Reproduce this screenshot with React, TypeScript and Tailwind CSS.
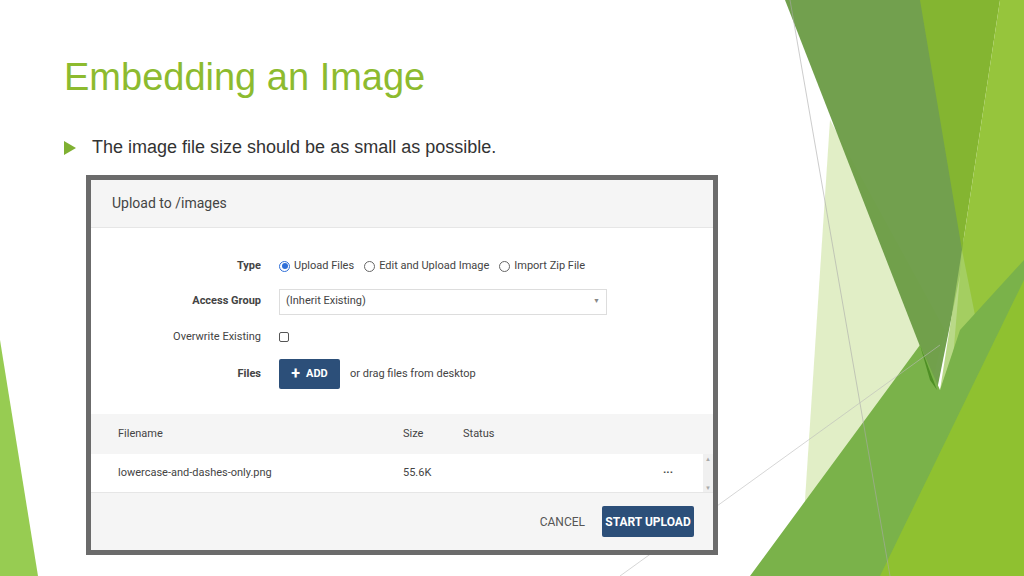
export default function App() {
  const font = { fontFamily: '"Liberation Sans", Arial, sans-serif' };
  const ui = { fontFamily: 'Roboto, "Liberation Sans", sans-serif' };
  return (
    <div className="relative w-[1024px] h-[576px] bg-white overflow-hidden" style={font}>
      <svg className="absolute inset-0" width="1024" height="576" viewBox="0 0 1024 576">
        <polygon points="0,340 0,576 38,576" fill="#8cc63f" opacity="0.9" />
        <polygon points="830,120 945,330 885,576 800,576" fill="#d9eab8" opacity="0.8" />
        <polygon points="785,0 925,0 965,250 937,390" fill="#6a9b45" opacity="0.95" />
        <polygon points="920,0 1000,0 962,250" fill="#84b531" />
        <polygon points="1000,0 1024,0 1024,576 935,576 962,250" fill="#96c53c" />
        <polygon points="962,250 980,340 940,390" fill="#a7d06a" opacity="0.8" />
        <polygon points="750,576 920,345 940,390 960,330 1024,260 1024,576" fill="#7ab24a" />
        <polygon points="920,345 937,390 930,380" fill="#4e8f25" />
        <polygon points="880,576 1024,280 1024,576" fill="#8fc130" />
        <line x1="790" y1="0" x2="890" y2="576" stroke="#aaa" strokeWidth="0.6" />
        <line x1="620" y1="576" x2="940" y2="345" stroke="#bbb" strokeWidth="0.6" />
      </svg>

      <div className="relative pl-[64px] pt-[58px]">
        <h1 className="text-[38px] text-[#8dbb2f] leading-none">Embedding an Image</h1>
        <div className="flex items-center mt-[38px] gap-[16px]">
          <svg width="12" height="14" viewBox="0 0 12 14"><polygon points="0,0 12,7 0,14" fill="#7fb032" /></svg>
          <span className="text-[18px] text-[#333]">The image file size should be as small as possible.</span>
        </div>
      </div>

      <div className="absolute left-[86px] top-[175px] w-[632px] h-[380px] bg-[#6b6b6b] p-[5px]" style={ui}>
        <div className="bg-white w-full h-full flex flex-col">
          <div className="h-[48px] bg-[#f5f5f5] border-b border-[#e6e6e6] flex items-center px-[21px] text-[14px] text-[#444]">Upload to /images</div>
          <div className="flex flex-col gap-[14px] pt-[30px] text-[11px] text-[#444]">
            <div className="flex items-center">
              <div className="w-[170px] text-right font-bold">Type</div>
              <div className="flex items-center gap-[10px] ml-[18px]">
                <label className="flex items-center gap-[4px]"><span className="w-[11px] h-[11px] rounded-full border border-[#2f6fd8] flex items-center justify-center"><span className="w-[6px] h-[6px] rounded-full bg-[#2f6fd8]" /></span>Upload Files</label>
                <label className="flex items-center gap-[4px]"><span className="w-[11px] h-[11px] rounded-full border border-[#666]" />Edit and Upload Image</label>
                <label className="flex items-center gap-[4px]"><span className="w-[11px] h-[11px] rounded-full border border-[#666]" />Import Zip File</label>
              </div>
            </div>
            <div className="flex items-center">
              <div className="w-[170px] text-right font-bold">Access Group</div>
              <div className="ml-[18px] w-[328px] h-[26px] border border-[#ddd] flex items-center justify-between px-[6px]">
                <span>(Inherit Existing)</span><span className="text-[7px] text-[#888]">▼</span>
              </div>
            </div>
            <div className="flex items-center">
              <div className="w-[170px] text-right">Overwrite Existing</div>
              <span className="ml-[18px] w-[10px] h-[10px] border border-[#555] rounded-[2px]" />
            </div>
            <div className="flex items-center">
              <div className="w-[170px] text-right font-bold">Files</div>
              <div className="ml-[18px] w-[61px] h-[30px] bg-[#2c4f79] text-white flex items-center justify-center gap-[6px] rounded-[2px] font-bold"><span className="text-[16px] leading-none">+</span>ADD</div>
              <span className="ml-[10px]">or drag files from desktop</span>
            </div>
          </div>
          <div className="mt-[25px] bg-[#f5f5f5] flex-1 flex flex-col text-[11px] text-[#444]">
            <div className="flex items-center h-[40px] px-[27px]">
              <span className="w-[285px]">Filename</span><span className="w-[60px]">Size</span><span>Status</span>
            </div>
            <div className="flex items-center h-[39px] bg-white pl-[27px] pr-[40px] border-b border-[#e6e6e6] relative">
              <span className="w-[285px]">lowercase-and-dashes-only.png</span><span className="flex-1">55.6K</span><span className="font-bold">···</span>
              <div className="absolute right-0 top-0 h-full w-[10px] bg-[#f0f0f0] flex flex-col justify-between items-center text-[6px] text-[#aaa]"><span>▲</span><span>▼</span></div>
            </div>
            <div className="flex-1 flex items-center justify-end gap-[17px] pr-[19px]">
              <span className="text-[12px] text-[#555]">CANCEL</span>
              <div className="w-[92px] h-[31px] bg-[#2c4f79] text-white text-[12px] font-bold flex items-center justify-center rounded-[2px]">START UPLOAD</div>
            </div>
          </div>
        </div>
      </div>
    </div>
  );
}
